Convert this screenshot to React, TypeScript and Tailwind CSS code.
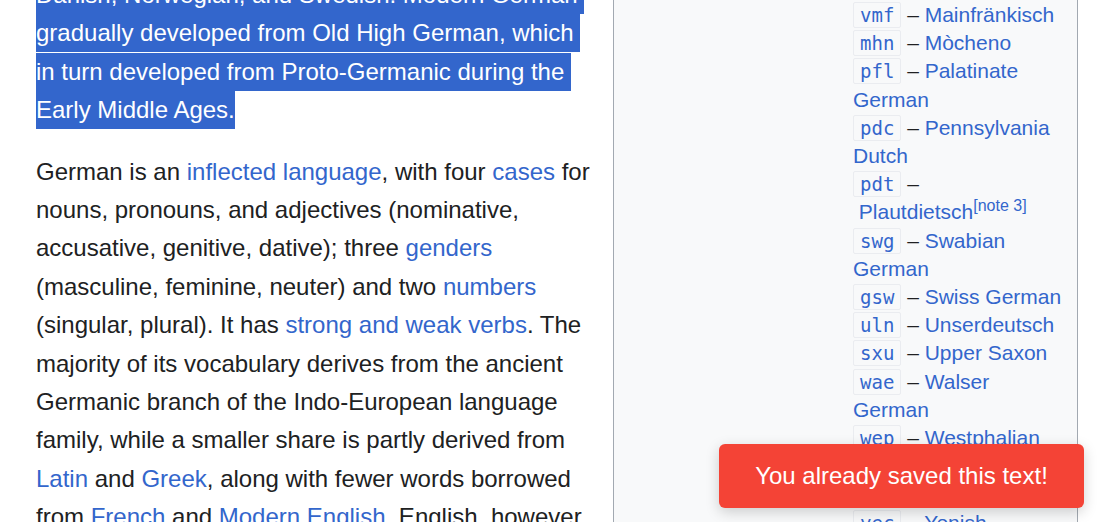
import { useEffect, useRef } from "react";

const link = "text-[#3366cc]";

const dialects: { code: string; name: string; note?: string; lead?: boolean }[] = [
  { code: "vmf", name: "Mainfränkisch" },
  { code: "mhn", name: "Mòcheno" },
  { code: "pfl", name: "Palatinate German" },
  { code: "pdc", name: "Pennsylvania Dutch" },
  { code: "pdt", name: "Plautdietsch", note: "[note 3]", lead: true },
  { code: "swg", name: "Swabian German" },
  { code: "gsw", name: "Swiss German" },
  { code: "uln", name: "Unserdeutsch" },
  { code: "sxu", name: "Upper Saxon" },
  { code: "wae", name: "Walser German" },
  { code: "wep", name: "Westphalian" },
  { code: "wym", name: "Wymysorys" },
  { code: "yih", name: "Yiddish" },
  { code: "yec", name: "Yenish" },
];

const DialectRow = ({ code, name, note, lead }: (typeof dialects)[number]) => {
  return (
    <div>
      <code className="rounded-[2px] border border-[#eaecf0] bg-[#f8f9fa] px-[6px] py-[1px] font-['DejaVu_Sans_Mono',monospace] text-[19px] text-[#3366cc]">
        {code}
      </code>{" "}
      – <a className={link}>{lead ? "\u00a0" + name : name}</a>
      {note && (
        <sup className={`${link} text-[16px] leading-none`}>{note}</sup>
      )}
    </div>
  );
};

const App = () => {
  const selected = useRef<HTMLParagraphElement>(null);

  useEffect(() => {
    const el = selected.current;
    const sel = window.getSelection();
    if (!el || !sel) return;
    const range = document.createRange();
    range.selectNodeContents(el);
    sel.removeAllRanges();
    sel.addRange(range);
  }, []);

  return (
    <div className="relative flex h-[522px] w-[1112px] overflow-hidden bg-white pl-[36px] font-['Liberation_Sans',Arial,sans-serif] text-[#202122]">
      <div className="-mt-6 w-[558px] shrink-0 text-[24px] leading-[38.4px]">
        <p
          ref={selected}
          className="selection:bg-[#3366cc] selection:text-white"
        >
          Danish, Norwegian, and Swedish. Modern German gradually developed
          from Old High German, which in turn developed from Proto-Germanic
          during the Early Middle Ages.
        </p>
        <p className="mt-[23px]">
          German is an <a className={link}>inflected language</a>, with four{" "}
          <a className={link}>cases</a> for nouns, pronouns, and adjectives
          (nominative, accusative, genitive, dative); three{" "}
          <a className={link}>genders</a> (masculine, feminine, neuter) and two{" "}
          <a className={link}>numbers</a> (singular, plural). It has{" "}
          <a className={link}>strong and weak verbs</a>. The majority of its
          vocabulary derives from the ancient Germanic branch of the
          Indo-European language family, while a smaller share is partly
          derived from <a className={link}>Latin</a> and{" "}
          <a className={link}>Greek</a>, along with fewer words borrowed from{" "}
          <a className={link}>French</a> and{" "}
          <a className={link}>Modern English</a>. English, however, is the main
          source of more recent loanwords.
        </p>
      </div>

      <div className="ml-[19px] w-[465px] shrink-0 border-x border-[#a2a9b1] bg-[#f8f9fa] pt-px pl-[239px] text-[21px] leading-[28.2px]">
        <div className="w-[213px]">
          {dialects.map((d) => (
            <DialectRow key={d.code} {...d} />
          ))}
        </div>
      </div>

      <div className="absolute right-[28px] bottom-[14px] flex h-[64px] w-[365px] items-center justify-center rounded-md bg-[#f44336] text-[24px] text-white shadow-[0_4px_14px_rgba(0,0,0,0.18)]">
        You already saved this text!
      </div>
    </div>
  );
};

export default App;
